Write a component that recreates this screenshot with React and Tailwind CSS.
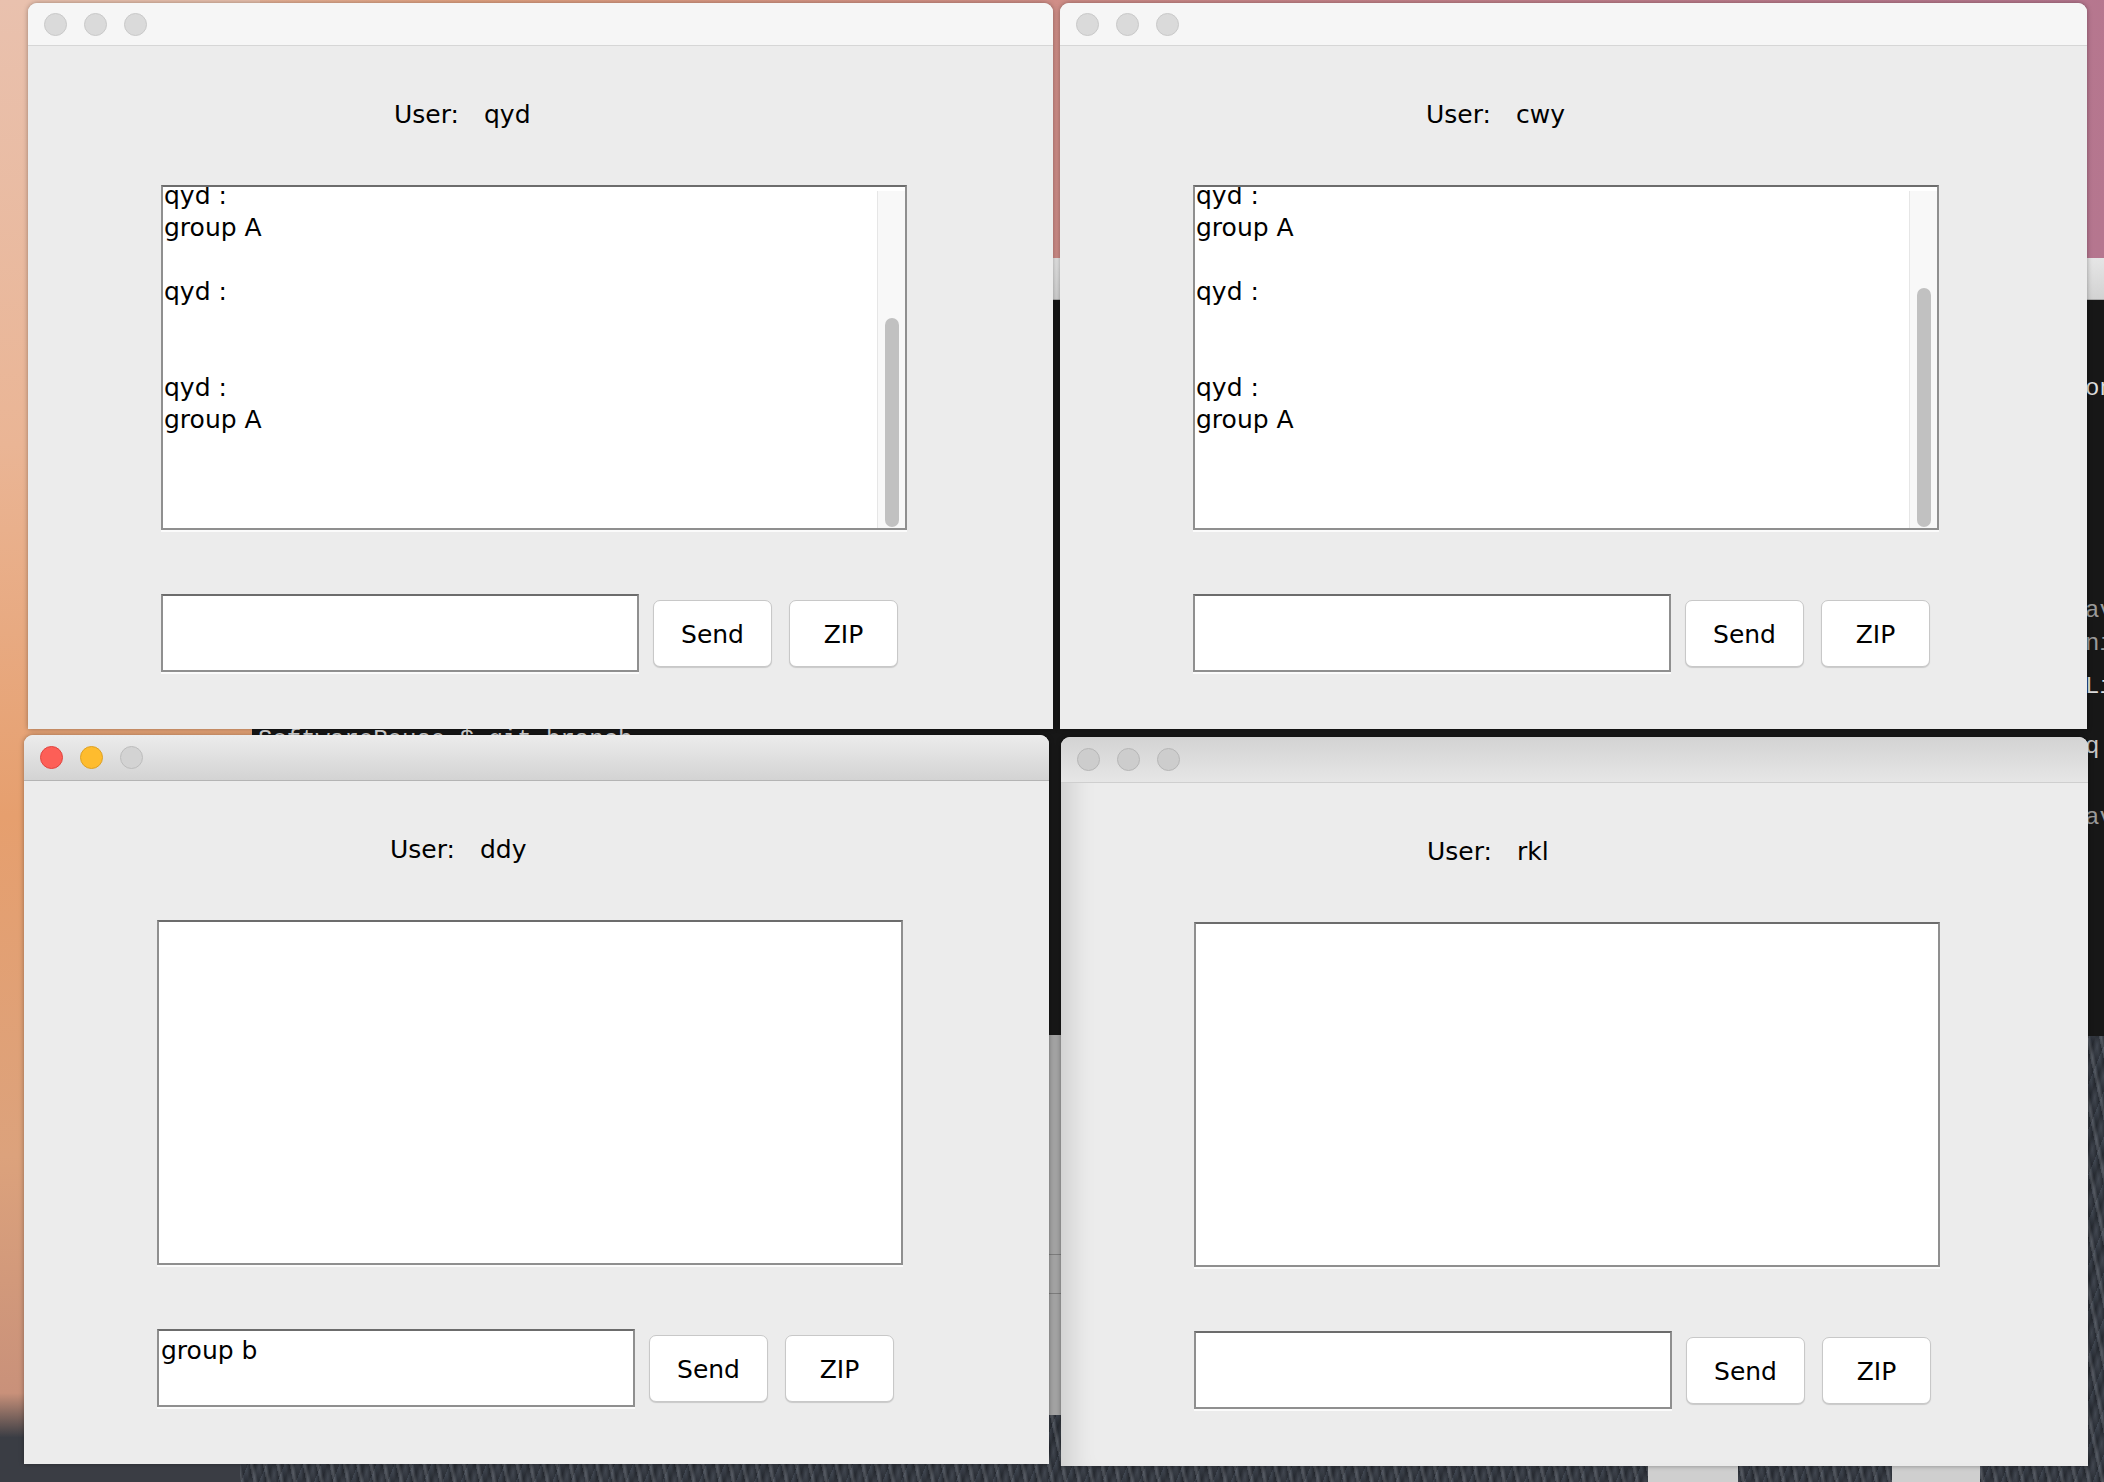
import React from 'react';

const chatLines = ['qyd :', 'group A', '', 'qyd :', '', '', 'qyd :', 'group A'];

function Lights({ active, dim }) {
  if (active) {
    return (
      <div className="flex gap-[17px]">
        <span className="w-[23px] h-[23px] rounded-full bg-[#fd5f57] border border-[#e0443e]" />
        <span className="w-[23px] h-[23px] rounded-full bg-[#febc2e] border border-[#dda024]" />
        <span className="w-[23px] h-[23px] rounded-full bg-[#d3d3d3] border border-[#bcbcbc]" />
      </div>
    );
  }
  const dot = dim
    ? 'w-[23px] h-[23px] rounded-full bg-[#cdcdcd] border border-[#b6b6b6]'
    : 'w-[23px] h-[23px] rounded-full bg-[#dadada] border border-[#c9c9c9]';
  return (
    <div className="flex gap-[17px]">
      <span className={dot} />
      <span className={dot} />
      <span className={dot} />
    </div>
  );
}

function ChatWindow({ pos, user, lines = [], thumb, draft = '', titleBar, active, dim, shade }) {
  return (
    <div className={`absolute ${pos} flex flex-col bg-[#ececec] rounded-t-[9px] overflow-hidden font-['DejaVu_Sans',sans-serif] text-black ${shade}`}>
      <div className={`shrink-0 flex items-center pl-[16px] border-b ${titleBar}`}>
        <Lights active={active} dim={dim} />
      </div>
      <div className="flex flex-col pl-[133px] text-[25px] leading-[32px]">
        <div className="flex mt-[53px] ml-[233px] h-[32px]">
          <span className="w-[90px]">User:</span>
          <span>{user}</span>
        </div>

        <div className="mt-[54px] w-[746px] h-[345px] flex bg-white border-2 border-[#8f8f8f] border-t-[#6c6c6c] shadow-[0_2px_0_#fbfbfb]">
          <div className="flex-1 overflow-hidden pl-[1px]">
            <div className="-mt-[7px]">
              {lines.map((l, i) => (
                <div key={i} className="h-[32px] whitespace-pre">{l}</div>
              ))}
            </div>
          </div>
          {thumb && (
            <div className="w-[28px] mt-[4px] bg-[#f8f8f8] border-l border-[#e6e6e6] flex justify-center">
              <div className={`w-[14px] rounded-full bg-[#c1c1c1] ${thumb}`} />
            </div>
          )}
        </div>

        <div className="mt-[64px] flex items-center">
          <div className="w-[478px] h-[78px] bg-white border-2 border-[#8f8f8f] border-t-[#6c6c6c] shadow-[0_2px_0_#fbfbfb] pl-[2px] pt-[4px] whitespace-pre">
            {draft}
          </div>
          <button className="ml-[14px] w-[119px] h-[67px] pt-[4px] bg-white border border-[#c8c8c8] rounded-[7px] shadow-[0_1px_1px_rgba(0,0,0,0.15)]">
            Send
          </button>
          <button className="ml-[17px] w-[109px] h-[67px] pt-[4px] bg-white border border-[#c8c8c8] rounded-[7px] shadow-[0_1px_1px_rgba(0,0,0,0.15)]">
            ZIP
          </button>
        </div>
      </div>
    </div>
  );
}

export default function App() {
  return (
    <div className="relative w-[2104px] h-[1482px] overflow-hidden bg-[linear-gradient(100deg,#eec6b2_0%,#e3a382_20%,#c8858a_55%,#b07290_100%)]">
      {/* orange left wallpaper */}
      <div className="absolute left-0 top-0 w-[260px] h-[1482px] bg-[linear-gradient(180deg,#e9c1ae_0%,#eab595_30%,#e69f6e_55%,#dca27c_78%,#c9917a_94%,#3a3d44_97%)]" />

      {/* rocks */}
      <div className="absolute left-[240px] top-[1030px] right-0 bottom-0 bg-[#30353e] bg-[repeating-linear-gradient(78deg,rgba(255,255,255,0.05)_0px,rgba(255,255,255,0.14)_2px,rgba(0,0,0,0.12)_5px,rgba(255,255,255,0.03)_9px,rgba(0,0,0,0.18)_13px),repeating-linear-gradient(112deg,rgba(120,135,155,0.18)_0px,rgba(0,0,0,0.15)_6px,rgba(150,160,175,0.12)_11px,rgba(0,0,0,0.1)_17px)]" />

      {/* terminal window behind */}
      <div className="absolute left-[252px] top-[258px] right-0 h-[778px] bg-[#171717] flex flex-col">
        <div className="h-[42px] bg-[linear-gradient(#e6e6e6,#d2d2d2)] border-b border-[#a9a9a9]" />
        <div className="relative flex-1 font-['Liberation_Mono',monospace] text-[24px] leading-[32px] text-[#dcdcdc]">
          <div className="absolute left-[6px] top-[424px] whitespace-pre">SoftwareReuse $ git branch</div>
          <div className="absolute left-[1833px] top-[73px] whitespace-pre">on</div>
          <div className="absolute left-[1833px] top-[295px] whitespace-pre text-[#9a9a9a]">av</div>
          <div className="absolute left-[1833px] top-[328px] whitespace-pre text-[#9a9a9a]">ni</div>
          <div className="absolute left-[1833px] top-[371px] whitespace-pre">Li</div>
          <div className="absolute left-[1833px] top-[431px] whitespace-pre text-[#c8c8c8]">q</div>
          <div className="absolute left-[1833px] top-[502px] whitespace-pre text-[#9a9a9a]">av</div>
        </div>
      </div>

      {/* grey window peeking between the lower chat windows */}
      <div className="absolute left-[1000px] top-[1035px] w-[120px] h-[380px] bg-[#a3a3a3] flex flex-col">
        <div className="mt-[219px] h-[40px] border-y border-[#7d7d7d]" />
      </div>

      <div className="absolute left-[1648px] bottom-0 w-[90px] h-[18px] bg-[#cfcfcf]" />
      <div className="absolute left-[1892px] bottom-0 w-[88px] h-[18px] bg-[#cfcfcf]" />

      <ChatWindow
        pos="left-[28px] top-[3px] w-[1025px] h-[726px]"
        user="qyd"
        lines={chatLines}
        thumb="mt-[127px] h-[209px]"
        titleBar="h-[43px] bg-[#f6f6f6] border-[#d6d6d6]"
        shade="shadow-[0_0_5px_rgba(0,0,0,0.35)]"
      />
      <ChatWindow
        pos="left-[1060px] top-[3px] w-[1027px] h-[726px]"
        user="cwy"
        lines={chatLines}
        thumb="mt-[97px] h-[239px]"
        titleBar="h-[43px] bg-[#f6f6f6] border-[#d6d6d6]"
        shade="shadow-[0_0_5px_rgba(0,0,0,0.35)]"
      />
      <ChatWindow
        pos="left-[24px] top-[735px] w-[1025px] h-[729px]"
        user="ddy"
        draft="group b"
        active
        titleBar="h-[46px] bg-[linear-gradient(#ececec,#d3d3d3)] border-[#b4b4b4]"
        shade="shadow-[0_0_5px_rgba(0,0,0,0.35)]"
      />
      <ChatWindow
        pos="left-[1061px] top-[737px] w-[1027px] h-[729px]"
        user="rkl"
        dim
        titleBar="h-[46px] bg-[linear-gradient(#d3d3d3,#e6e6e6)] border-[#cfcfcf]"
        shade="shadow-[0_0_5px_rgba(0,0,0,0.35),inset_30px_0_26px_-20px_rgba(0,0,0,0.13)]"
      />
    </div>
  );
}
